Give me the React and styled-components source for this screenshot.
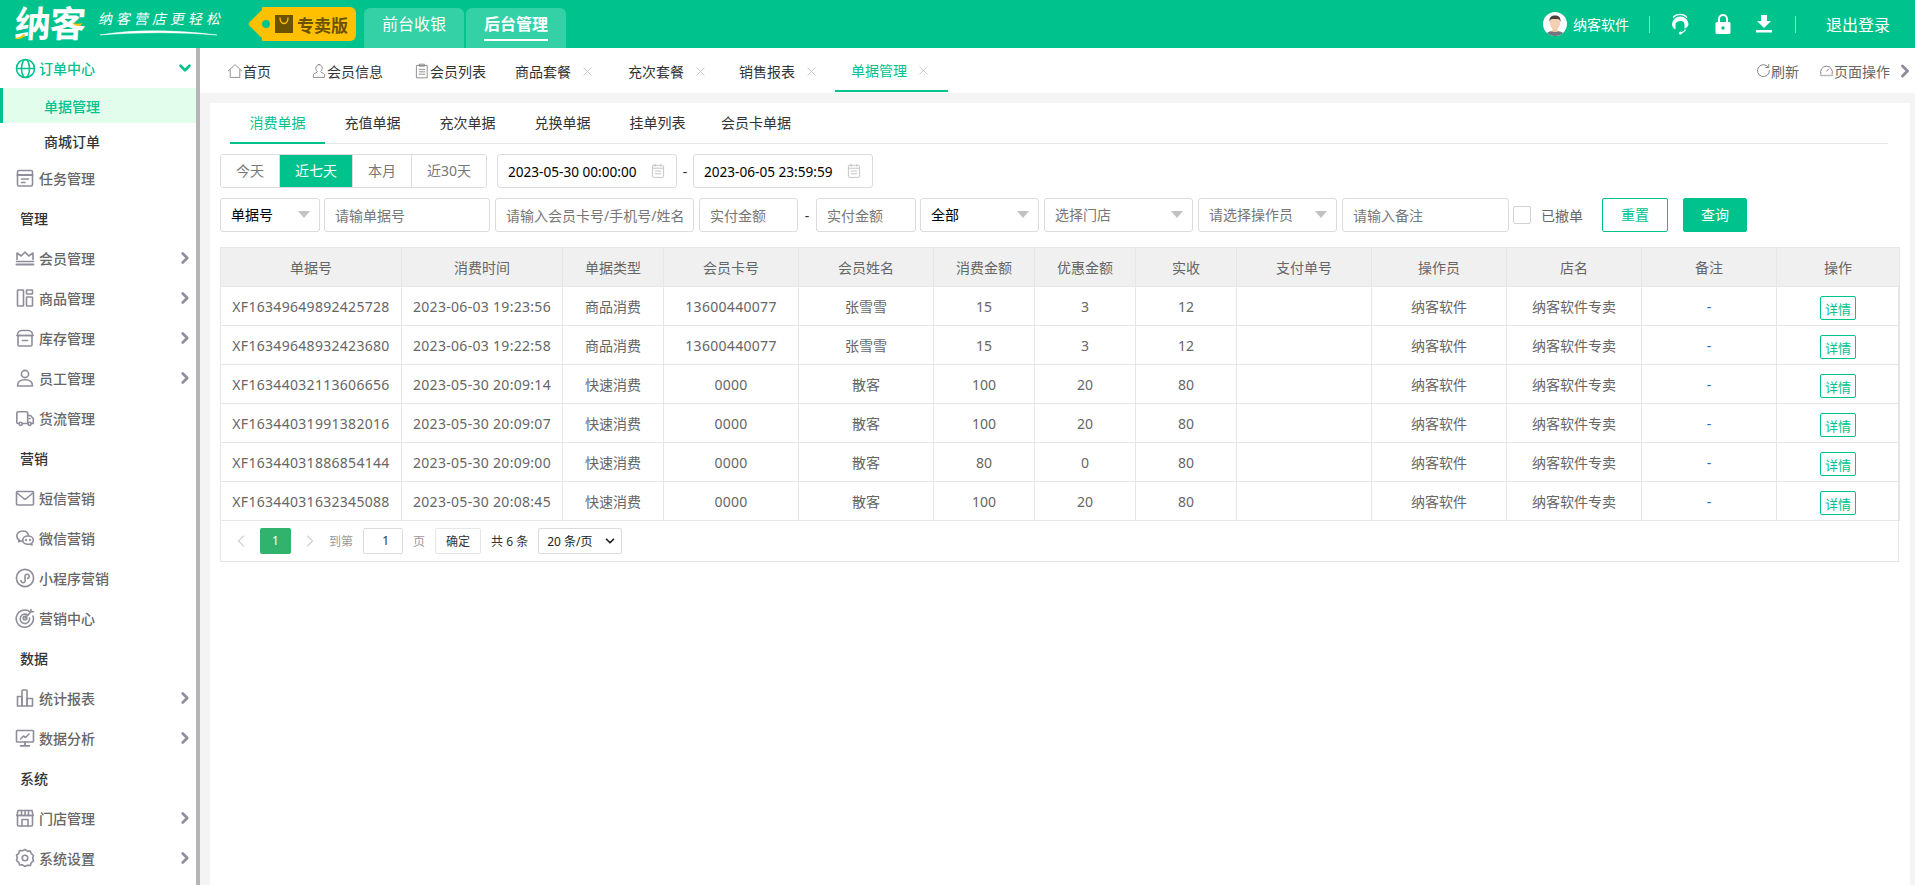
import React from "react";
import styled, { createGlobalStyle } from "styled-components";
import { ChevronDown, ChevronRight, ChevronLeft, X } from "lucide-react";

const COLUMNS = [
  { title: "单据号", width: 181, key: "no", num: true },
  { title: "消费时间", width: 161, key: "time", num: true },
  { title: "单据类型", width: 101, key: "type" },
  { title: "会员卡号", width: 135, key: "card", num: true },
  { title: "会员姓名", width: 135, key: "name" },
  { title: "消费金额", width: 101, key: "amount" },
  { title: "优惠金额", width: 101, key: "discount" },
  { title: "实收", width: 101, key: "paid" },
  { title: "支付单号", width: 135, key: "payNo" },
  { title: "操作员", width: 135, key: "operator" },
  { title: "店名", width: 135, key: "shop" },
  { title: "备注", width: 135, key: "note" },
  { title: "操作", width: 123, key: "action" },
];

const ROWS = [
  ["XF16349649892425728", "2023-06-03 19:23:56", "商品消费", "13600440077", "张雪雪", 15, 3, 12],
  ["XF16349648932423680", "2023-06-03 19:22:58", "商品消费", "13600440077", "张雪雪", 15, 3, 12],
  ["XF16344032113606656", "2023-05-30 20:09:14", "快速消费", "0000", "散客", 100, 20, 80],
  ["XF16344031991382016", "2023-05-30 20:09:07", "快速消费", "0000", "散客", 100, 20, 80],
  ["XF16344031886854144", "2023-05-30 20:09:00", "快速消费", "0000", "散客", 80, 0, 80],
  ["XF16344031632345088", "2023-05-30 20:08:45", "快速消费", "0000", "散客", 100, 20, 80],
].map(([no, time, type, card, name, amount, discount, paid]) => ({
  no, time, type, card, name, amount, discount, paid,
  payNo: "", operator: "纳客软件", shop: "纳客软件专卖", note: "-",
}));

function Ico({ children, size = 20, color = "#8e8e9a", sw = 1.6 }) {
  return (
    <svg width={size} height={size} viewBox="0 0 20 20" fill="none" stroke={color} strokeWidth={sw} strokeLinecap="round" strokeLinejoin="round">
      {children}
    </svg>
  );
}

const SIDE_ICONS = {
  globe: (
    <Ico color="#00c28d" size={21} sw={1.5}>
      <circle cx="10" cy="10" r="8.6" />
      <ellipse cx="10" cy="10" rx="3.8" ry="8.6" />
      <path d="M1.6 10h16.8" />
    </Ico>
  ),
  task: (
    <Ico>
      <rect x="2.5" y="2.5" width="15" height="15.5" rx="1.5" />
      <path d="M2.5 7h15" strokeWidth="2" />
      <path d="M6.5 11h7M6.5 14.5h3.5" />
    </Ico>
  ),
  crown: (
    <Ico>
      <path d="M2 11.5V5l4.2 3L10 4l3.8 4L18 5v6.5" />
      <path d="M1.5 13.5h17" />
      <path d="M1.5 16.5h17" strokeWidth="1.8" />
    </Ico>
  ),
  goods: (
    <Ico>
      <rect x="2.5" y="2" width="6" height="16" rx=".6" />
      <rect x="11.5" y="2" width="6" height="4" rx=".6" />
      <rect x="11.5" y="9" width="6" height="9" rx=".6" />
    </Ico>
  ),
  box: (
    <Ico>
      <path d="M2.5 7.5c0-3 1.8-5 4-5h7c2.2 0 4 2 4 5" />
      <path d="M1.8 7.5h16.4" />
      <rect x="3" y="7.5" width="14" height="10.5" rx="1.2" />
      <path d="M7.5 12.5h5" />
    </Ico>
  ),
  user: (
    <Ico>
      <circle cx="10" cy="6" r="3.6" />
      <path d="M2.5 18c0-4 3-6.2 7.5-6.2s7.5 2.2 7.5 6.2z" />
    </Ico>
  ),
  truck: (
    <Ico>
      <path d="M4 15.5H3a1.2 1.2 0 0 1-1.2-1.2V5A1.2 1.2 0 0 1 3 3.8h8.5A1.2 1.2 0 0 1 12.7 5v10.5H7.5" />
      <path d="M12.7 7.5h2.8l2.8 3v5h-2" />
      <circle cx="5.7" cy="15.8" r="1.6" />
      <circle cx="14.6" cy="15.8" r="1.6" />
      <path d="M15 10.5h-1" />
    </Ico>
  ),
  mail: (
    <Ico>
      <rect x="1.5" y="3.5" width="17" height="13.5" rx="1" />
      <path d="M2 5l8 6.5L18 5" />
    </Ico>
  ),
  wechat: (
    <Ico>
      <path d="M13.5 7.2C13 4.8 10.6 3 7.7 3 4.5 3 1.8 5.2 1.8 8c0 1.6.9 3 2.3 4l-.5 1.8 2.2-1c.6.1 1.2.2 1.9.2" />
      <path d="M13 8c3 0 5.3 1.9 5.3 4.2 0 1.2-.6 2.3-1.7 3.1l.4 1.7-2-1c-.6.2-1.3.3-2 .3-3 0-5.3-1.8-5.3-4.1S10 8 13 8z" />
      <circle cx="11" cy="12" r=".4" />
      <circle cx="15" cy="12" r=".4" />
    </Ico>
  ),
  mini: (
    <Ico>
      <circle cx="10" cy="10" r="8.6" />
      <path d="M6 12.6a2.1 2.1 0 1 0 4-.9V8.3a2.1 2.1 0 1 1 2.4 2.1" />
    </Ico>
  ),
  target: (
    <Ico>
      <path d="M15.5 4.2A8.6 8.6 0 1 0 18 8" />
      <path d="M12.8 7.2A4.7 4.7 0 1 0 14.5 10" />
      <circle cx="10" cy="10" r="1.8" />
      <path d="M10 10l6-6.2M16 1.5v2.3h2.5" />
    </Ico>
  ),
  chart: (
    <Ico>
      <rect x="2.5" y="8.5" width="4.5" height="9.5" />
      <rect x="7" y="2" width="5" height="16" rx=".8" />
      <rect x="12" y="10.5" width="5.5" height="7.5" />
    </Ico>
  ),
  monitor: (
    <Ico>
      <rect x="1.5" y="2.5" width="17" height="11.5" rx=".8" />
      <path d="M10 14v3.5M5.5 17.8h9" strokeWidth="1.8" />
      <path d="M5.5 11l3-3 2 1.5 3.5-3.5" />
    </Ico>
  ),
  store: (
    <Ico>
      <path d="M2.5 7.5V17a1 1 0 0 0 1 1h13a1 1 0 0 0 1-1V7.5" />
      <path d="M2 7.5L3 2.5h14l1 5z" />
      <path d="M2 7.5h16M6.5 2.5v5M10 2.5v5M13.5 2.5v5" />
      <path d="M7 18v-6.5h6V18" />
    </Ico>
  ),
  gear: (
    <Ico>
      <path d="M10 1.5l2.4 1.6 2.9-.1 1 2.7 2.2 1.8-.8 2.7.8 2.7-2.2 1.8-1 2.7-2.9-.1L10 18.5l-2.4-1.6-2.9.1-1-2.7-2.2-1.8.8-2.7-.8-2.7 2.2-1.8 1-2.7 2.9.1z" />
      <circle cx="10" cy="10" r="2.8" />
    </Ico>
  ),
};

const MENU = [
  { label: "任务管理", icon: "task" },
  { group: "管理" },
  { label: "会员管理", icon: "crown", more: true },
  { label: "商品管理", icon: "goods", more: true },
  { label: "库存管理", icon: "box", more: true },
  { label: "员工管理", icon: "user", more: true },
  { label: "货流管理", icon: "truck" },
  { group: "营销" },
  { label: "短信营销", icon: "mail" },
  { label: "微信营销", icon: "wechat" },
  { label: "小程序营销", icon: "mini" },
  { label: "营销中心", icon: "target" },
  { group: "数据" },
  { label: "统计报表", icon: "chart", more: true },
  { label: "数据分析", icon: "monitor", more: true },
  { group: "系统" },
  { label: "门店管理", icon: "store", more: true },
  { label: "系统设置", icon: "gear", more: true },
];

const TOP_TABS = [
  { label: "首页", icon: "home", width: 84 },
  { label: "会员信息", icon: "user", width: 103 },
  { label: "会员列表", icon: "clip", width: 101 },
  { label: "商品套餐", closable: true, width: 113 },
  { label: "充次套餐", closable: true, width: 111 },
  { label: "销售报表", closable: true, width: 112 },
  { label: "单据管理", closable: true, width: 113, active: true },
];

const TAB_ICONS = {
  home: (
    <Ico size={16} color="#777" sw={1}>
      <path d="M1.5 10L10 2l8.5 8M4 8.5V18h12V8.5" />
    </Ico>
  ),
  user: (
    <Ico size={16} color="#777" sw={1}>
      <path d="M10 2c2.5 0 4 2 4 4.5 0 2-1 3.5-2 4.3 0 1 3.8 1.7 5 3.7V18H3v-3.5c1.2-2 5-2.7 5-3.7-1-.8-2-2.3-2-4.3C6 4 7.5 2 10 2z" />
    </Ico>
  ),
  clip: (
    <Ico size={16} color="#777" sw={1}>
      <rect x="3.5" y="3" width="13" height="15.5" />
      <path d="M7 1.5h6V4H7zM6.5 8h7M6.5 11h7M6.5 14h7" />
    </Ico>
  ),
};

const SUB_TABS = ["消费单据", "充值单据", "充次单据", "兑换单据", "挂单列表", "会员卡单据"];
const RANGES = [
  { label: "今天", width: 58 },
  { label: "近七天", width: 73, active: true },
  { label: "本月", width: 59 },
  { label: "近30天", width: 75 },
];

function CalendarIcon() {
  return (
    <Ico size={16} color="#c4c4c4" sw={1.2}>
      <rect x="3" y="3" width="14" height="15" rx="1" />
      <path d="M6.5 1.5V4M13.5 1.5V4M3 6.5h14M6.5 10h7M6.5 13.5h7" />
    </Ico>
  );
}

function App() {
  return (
    <>
      <GlobalStyle />
      <Page>
        <Header>
          <Logo>
            <LogoMark>
              纳客
              <LogoAccent width="72" height="30" viewBox="0 0 72 30">
                <path d="M0 28c3 0 7-1 9-4l2 1c-2 4-7 5-11 3z" fill="#ffc000" />
                <path d="M58 13c3 1 6 1 9 0l-1 2c-3 2-6 1-8-2z" fill="#ffc000" />
              </LogoAccent>
            </LogoMark>
            <Slogan>
              <SloganText>纳客营店更轻松</SloganText>
              <svg width="120" height="8" viewBox="0 0 120 8" fill="none">
                <path d="M1 6C30 1 70 0 118 6C80 3 40 3 1 6z" fill="#fff" stroke="#fff" strokeWidth=".5" />
              </svg>
            </Slogan>
          </Logo>
          <PriceTag>
            <svg width="18" height="18" viewBox="0 0 18 18">
              <rect width="18" height="18" fill="#6b5200" />
              <path d="M5 2.5c0 4 1.5 6 4 6s4-2 4-6" fill="none" stroke="#ffc000" strokeWidth="1.3" />
            </svg>
            <span>专卖版</span>
          </PriceTag>
          <NavTab>
            <NavLabel>前台收银</NavLabel>
          </NavTab>
          <NavTab>
            <NavLabel $active>后台管理</NavLabel>
          </NavTab>
          <HeaderRight>
            <svg width="24" height="24" viewBox="0 0 24 24">
              <defs>
                <clipPath id="avatar-clip"><circle cx="12" cy="12" r="12" /></clipPath>
              </defs>
              <g clipPath="url(#avatar-clip)">
                <rect width="24" height="24" fill="#fff" />
                <path d="M2 24c1-4 5-5 10-5s9 1 10 5z" fill="#74747e" />
                <rect x="9.5" y="14" width="5" height="6" fill="#eec4a4" />
                <ellipse cx="12" cy="11" rx="5.2" ry="6.5" fill="#f4cfb2" />
                <path d="M6.5 10c-.5-5 2-6.5 5.5-6.5s6 1.5 5.5 6.5c-.5-2-1.5-3-2.5-3H9c-1 0-2 1-2.5 3z" fill="#4a3f3a" />
              </g>
            </svg>
            <UserName>纳客软件</UserName>
            <Divider />
            <HeaderIcons>
              <svg width="20" height="22" viewBox="0 0 20 22" fill="none">
                <path d="M3 4.5a9.5 9.5 0 0 1 14 0" stroke="#fff" strokeWidth="1.2" />
                <path d="M10 3.5a8 8 0 0 0-8 7.5c0 2.5 1.2 4.5 3.5 5.5V11c0-1.5 1.5-2.5 4.5-3 2.5-.4 4 .5 4.5 3v4.5c2-.5 4-2 4-4.500a8 8 0 0 0-8.500-7.500z" fill="#fff" />
                <path d="M15.5 16.500c-1 2-2.500 3.200-4.500 3.500" stroke="#fff" strokeWidth="1.2" />
                <circle cx="10.5" cy="20" r="1.6" fill="#fff" />
              </svg>
              <svg width="16" height="20" viewBox="0 0 16 20">
                <path d="M4 9V5a4 4 0 0 1 8 0v4" fill="none" stroke="#fff" strokeWidth="2" />
                <rect x=".5" y="8" width="15" height="12" rx="1.5" fill="#fff" />
                <circle cx="8" cy="14" r="1.7" fill="#00c28d" />
              </svg>
              <svg width="16" height="18" viewBox="0 0 16 18" fill="#fff">
                <path d="M5 0h6v6h4l-7 7-7-7h4z" />
                <rect y="15" width="16" height="2.5" />
              </svg>
            </HeaderIcons>
            <Divider />
            <Logout>退出登录</Logout>
          </HeaderRight>
        </Header>

        <Body>
          <Sidebar>
            <MenuRow>
              <MenuIcon>{SIDE_ICONS.globe}</MenuIcon>
              <MenuLabel $open>订单中心</MenuLabel>
              <ChevronDown size={18} strokeWidth={3.5} color="#00c28d" />
            </MenuRow>
            <SubItem $active>单据管理</SubItem>
            <SubItem>商城订单</SubItem>
            {MENU.map((item) =>
              item.group ? (
                <MenuGroup key={item.group}>{item.group}</MenuGroup>
              ) : (
                <MenuRow key={item.label}>
                  <MenuIcon>{SIDE_ICONS[item.icon]}</MenuIcon>
                  <MenuLabel>{item.label}</MenuLabel>
                  {item.more && <ChevronRight size={18} strokeWidth={3.5} color="#8e8e9a" />}
                </MenuRow>
              )
            )}
          </Sidebar>

          <Main>
            <TopBar>
              {TOP_TABS.map((tab) => (
                <TopTab key={tab.label} $active={tab.active} $width={tab.width}>
                  {tab.icon && TAB_ICONS[tab.icon]}
                  {tab.label}
                  {tab.closable && (
                    <CloseIcon>
                      <X size={15} strokeWidth={1} color="#b4b4b4" />
                    </CloseIcon>
                  )}
                </TopTab>
              ))}
              <TopActions>
                <TopAction>
                  <Ico size={15} color="#777" sw={1.2}>
                    <path d="M16.5 5.5A8 8 0 1 0 18 10" />
                    <path d="M17 2v4h-4" />
                  </Ico>
                  刷新
                </TopAction>
                <TopAction>
                  <Ico size={15} color="#777" sw={1.2}>
                    <path d="M2.5 15a8 8 0 1 1 15 0" />
                    <path d="M10 11l3-3" />
                    <path d="M2 16.5h16" stroke="#bbb" strokeWidth="2" />
                  </Ico>
                  页面操作
                </TopAction>
                <TopChevron>
                  <ChevronRight size={20} strokeWidth={3.5} color="#8e8e9a" />
                </TopChevron>
              </TopActions>
            </TopBar>

            <Card>
              <SubTabs>
                {SUB_TABS.map((label, i) => (
                  <SubTab key={label} $active={i === 0}>{label}</SubTab>
                ))}
              </SubTabs>

              <FilterRow>
                <RangeGroup>
                  {RANGES.map((range) => (
                    <RangeButton key={range.label} $active={range.active} $width={range.width}>{range.label}</RangeButton>
                  ))}
                </RangeGroup>
                <DateBox $ml={10}>
                  2023-05-30 00:00:00
                  <CalendarIcon />
                </DateBox>
                <Dash $width={16}>-</Dash>
                <DateBox>
                  2023-06-05 23:59:59
                  <CalendarIcon />
                </DateBox>
              </FilterRow>

              <FilterRow>
                <SelectBox $width={100} $filled>单据号</SelectBox>
                <TextInput $width={166} $ml={4} placeholder="请输单据号" />
                <TextInput $width={199} $ml={5} placeholder="请输入会员卡号/手机号/姓名" />
                <TextInput $width={99} $ml={5} placeholder="实付金额" />
                <Dash $width={18}>-</Dash>
                <TextInput $width={100} placeholder="实付金额" />
                <SelectBox $width={119} $ml={4} $filled>全部</SelectBox>
                <SelectBox $width={149} $ml={5}>选择门店</SelectBox>
                <SelectBox $width={139} $ml={5}>请选择操作员</SelectBox>
                <TextInput $width={167} $ml={5} placeholder="请输入备注" />
                <CheckBox />
                <CheckLabel>已撤单</CheckLabel>
                <ActionButton $ml={19} $width={66}>重置</ActionButton>
                <ActionButton $ml={15} $width={64} $primary>查询</ActionButton>
              </FilterRow>

              <TableWrap>
                <Table>
                  <colgroup>
                    {COLUMNS.map((col) => (
                      <col key={col.key} style={{ width: col.width }} />
                    ))}
                  </colgroup>
                  <thead>
                    <tr>
                      {COLUMNS.map((col) => (
                        <HeadCell key={col.key}>{col.title}</HeadCell>
                      ))}
                    </tr>
                  </thead>
                  <tbody>
                    {ROWS.map((row) => (
                      <tr key={row.no}>
                        {COLUMNS.map((col) =>
                          col.key === "action" ? (
                            <Cell key={col.key}><DetailButton>详情</DetailButton></Cell>
                          ) : (
                            <Cell key={col.key} $num={col.num} $note={col.key === "note"}>{row[col.key]}</Cell>
                          )
                        )}
                      </tr>
                    ))}
                  </tbody>
                </Table>
                <Pagination>
                  <ChevronLeft size={20} strokeWidth={1.5} color="#d2d2d2" />
                  <PageCurrent>1</PageCurrent>
                  <ChevronRight size={20} strokeWidth={1.5} color="#d2d2d2" />
                  <PageText $ml={9}>到第</PageText>
                  <PageInput>1</PageInput>
                  <PageText>页</PageText>
                  <PageConfirm>确定</PageConfirm>
                  <PageTotal>共 6 条</PageTotal>
                  <PageSize>
                    20 条/页
                    <ChevronDown size={14} strokeWidth={3} color="#222" />
                  </PageSize>
                </Pagination>
              </TableWrap>
            </Card>
          </Main>
        </Body>
      </Page>
    </>
  );
}

export default App;

const GREEN = "#00c28d";

const GlobalStyle = createGlobalStyle`
  html, body {
    margin: 0;
    padding: 0;
    height: 100%;
    overflow: hidden;
  }
  body {
    font-family: "Noto Sans", "Noto Sans CJK SC", sans-serif;
    font-size: 14px;
    color: #333;
  }
  * {
    box-sizing: border-box;
  }
`;

const Page = styled.div`
  width: 1915px;
  height: 885px;
  display: flex;
  flex-direction: column;
`;

const Header = styled.header`
  height: 48px;
  flex: none;
  display: flex;
  align-items: flex-end;
  background: ${GREEN};
  color: #fff;
`;

const Logo = styled.div`
  width: 250px;
  height: 48px;
  padding-left: 15px;
  display: flex;
  align-items: center;
  gap: 14px;
`;

const LogoMark = styled.div`
  position: relative;
  font-size: 36px;
  line-height: 40px;
  font-weight: 700;
  letter-spacing: -1px;
  transform: skewX(-4deg);
`;

const LogoAccent = styled.svg`
  position: absolute;
  left: 0;
  top: 6px;
`;

const Slogan = styled.div`
  display: flex;
  flex-direction: column;
  height: 30px;
`;

const SloganText = styled.div`
  font-size: 14px;
  line-height: 20px;
  letter-spacing: 4px;
  white-space: nowrap;
  transform: skewX(-12deg);
`;

const PriceTag = styled.div`
  position: relative;
  width: 94px;
  height: 34px;
  margin: 0 8px 7px 12px;
  display: flex;
  align-items: center;
  justify-content: flex-end;
  gap: 4px;
  padding-right: 8px;
  background: #ffc000;
  border-radius: 0 6px 6px 0;
  font-size: 17px;
  font-weight: 700;
  color: #6b5200;
  &::before {
    content: "";
    position: absolute;
    left: -11px;
    top: 5px;
    width: 24px;
    height: 24px;
    background: #ffc000;
    border-radius: 3px;
    transform: rotate(45deg) scale(.9);
  }
  &::after {
    content: "";
    position: absolute;
    left: 0;
    top: 13px;
    width: 8px;
    height: 8px;
    border-radius: 50%;
    background: ${GREEN};
  }
  & > * {
    position: relative;
    z-index: 1;
  }
`;

const NavTab = styled.div`
  width: 100px;
  height: 40px;
  margin-right: 2px;
  display: flex;
  justify-content: center;
  background: #33d1a5;
  border-radius: 6px 6px 0 0;
`;

const NavLabel = styled.div`
  height: 33px;
  padding-top: 3px;
  font-size: 16px;
  line-height: 27px;
  font-weight: ${(p) => (p.$active ? 700 : 400)};
  border-bottom: ${(p) => (p.$active ? "2px solid #fff" : "none")};
`;

const HeaderRight = styled.div`
  margin-left: auto;
  height: 48px;
  padding-right: 25px;
  display: flex;
  align-items: center;
`;

const UserName = styled.span`
  margin-left: 6px;
  font-size: 14px;
`;

const Divider = styled.div`
  width: 1px;
  height: 17px;
  margin: 0 20px;
  background: rgba(255, 255, 255, 0.55);
`;

const HeaderIcons = styled.div`
  margin-right: 3px;
  display: flex;
  align-items: center;
  gap: 25px;
`;

const Logout = styled.span`
  margin-left: 10px;
  font-size: 16px;
`;

const Body = styled.div`
  flex: 1;
  min-height: 0;
  display: flex;
`;

const Sidebar = styled.aside`
  width: 200px;
  flex: none;
  background: #fff;
  border-right: 4px solid #b5b5b5;
  overflow: hidden;
`;

const MenuRow = styled.div`
  height: 40px;
  padding: 0 2px 0 15px;
  display: flex;
  align-items: center;
`;

const MenuIcon = styled.span`
  width: 24px;
  flex: none;
  display: flex;
  align-items: center;
`;

const MenuLabel = styled.span`
  flex: 1;
  font-size: 14px;
  font-weight: 500;
  color: ${(p) => (p.$open ? GREEN : "#666")};
`;

const SubItem = styled.div`
  height: 35px;
  padding-left: ${(p) => (p.$active ? "41px" : "44px")};
  display: flex;
  align-items: center;
  font-weight: 500;
  color: ${(p) => (p.$active ? GREEN : "#333")};
  background: ${(p) => (p.$active ? "#e3fdec" : "transparent")};
  border-left: ${(p) => (p.$active ? `3px solid ${GREEN}` : "none")};
`;

const MenuGroup = styled.div`
  height: 40px;
  padding-left: 20px;
  display: flex;
  align-items: center;
  font-weight: 500;
  color: #333;
`;

const Main = styled.main`
  flex: 1;
  min-width: 0;
  display: flex;
  flex-direction: column;
  background: #f4f4f4;
`;

const TopBar = styled.div`
  height: 45px;
  flex: none;
  padding-left: 11px;
  display: flex;
  background: #fff;
`;

const TopTab = styled.div`
  position: relative;
  width: ${(p) => p.$width}px;
  height: 44px;
  padding: 2px 0 0 16px;
  display: flex;
  align-items: center;
  flex: none;
  font-size: 14px;
  color: ${(p) => (p.$active ? GREEN : "#333")};
  border-bottom: ${(p) => (p.$active ? `2px solid ${GREEN}` : "none")};
`;

const CloseIcon = styled.span`
  margin-left: 9px;
  display: flex;
`;

const TopActions = styled.div`
  margin-left: auto;
  display: flex;
  align-items: center;
  gap: 20px;
`;

const TopAction = styled.div`
  display: flex;
  align-items: center;
  color: #666;
`;

const TopChevron = styled.span`
  margin-left: -15px;
  display: flex;
`;

const Card = styled.section`
  flex: 1;
  margin: 10px 5px 0 10px;
  padding: 0 11px 0 10px;
  background: #fff;
`;

const SubTabs = styled.div`
  height: 41px;
  margin: 0 11px 0 10px;
  display: flex;
  border-bottom: 1px solid #e6e6e6;
`;

const SubTab = styled.div`
  height: 41px;
  padding: 0 19.5px;
  line-height: 40px;
  color: ${(p) => (p.$active ? GREEN : "#333")};
  border-bottom: ${(p) => (p.$active ? `2px solid ${GREEN}` : "none")};
  &:last-child {
    padding-left: 16px;
  }
`;

const FilterRow = styled.div`
  height: 34px;
  margin-top: 10px;
  display: flex;
  align-items: center;
`;

const RangeGroup = styled.div`
  display: flex;
  height: 34px;
  border: 1px solid #dcdcdc;
  border-radius: 3px;
  overflow: hidden;
`;

const RangeButton = styled.div`
  width: ${(p) => p.$width}px;
  text-align: center;
  line-height: 32px;
  color: ${(p) => (p.$active ? "#fff" : "#777")};
  background: ${(p) => (p.$active ? GREEN : "#fff")};
  & + & {
    border-left: ${(p) => (p.$active ? "none" : "1px solid #dcdcdc")};
  }
`;

const DateBox = styled.div`
  width: 180px;
  height: 34px;
  margin-left: ${(p) => p.$ml || 0}px;
  padding: 0 10px;
  display: flex;
  align-items: center;
  justify-content: space-between;
  border: 1px solid #dcdcdc;
  border-radius: 3px;
  font-size: 13.6px;
  color: #000;
`;

const Dash = styled.span`
  width: ${(p) => p.$width}px;
  flex: none;
  text-align: center;
  color: #333;
`;

const TextInput = styled.input`
  width: ${(p) => p.$width}px;
  height: 34px;
  margin-left: ${(p) => p.$ml || 0}px;
  padding: 0 10px;
  flex: none;
  border: 1px solid #dcdcdc;
  border-radius: 3px;
  outline: none;
  font: inherit;
  &::placeholder {
    color: #777;
  }
`;

const SelectBox = styled.div`
  position: relative;
  width: ${(p) => p.$width}px;
  height: 34px;
  margin-left: ${(p) => p.$ml || 0}px;
  padding-left: 10px;
  flex: none;
  line-height: 32px;
  border: 1px solid #dcdcdc;
  border-radius: 3px;
  color: ${(p) => (p.$filled ? "#000" : "#777")};
  &::after {
    content: "";
    position: absolute;
    right: 9px;
    top: 12px;
    border-style: solid;
    border-width: 7px 6px 0;
    border-color: #c2c2c2 transparent transparent;
  }
`;

const CheckBox = styled.span`
  width: 18px;
  height: 18px;
  margin-left: 4px;
  flex: none;
  border: 1px solid #d2d2d2;
  border-radius: 2px;
`;

const CheckLabel = styled.span`
  margin-left: 10px;
  color: #666;
`;

const ActionButton = styled.div`
  width: ${(p) => p.$width}px;
  height: 34px;
  margin-left: ${(p) => p.$ml}px;
  flex: none;
  text-align: center;
  line-height: 32px;
  border: 1px solid ${GREEN};
  border-radius: 2px;
  color: ${(p) => (p.$primary ? "#fff" : GREEN)};
  background: ${(p) => (p.$primary ? GREEN : "#fff")};
`;

const TableWrap = styled.div`
  margin-top: 15px;
  border: 1px solid #e6e6e6;
`;

const Table = styled.table`
  width: 100%;
  table-layout: fixed;
  border-collapse: collapse;
  margin: -1px 0 0 -1px;
`;

const HeadCell = styled.th`
  height: 39px;
  padding: 0;
  font-weight: 400;
  color: #666;
  background: #f0f0f0;
  border: 1px solid #e6e6e6;
`;

const Cell = styled.td`
  height: 39px;
  padding: 0;
  text-align: center;
  color: ${(p) => (p.$note ? "#1e6fc8" : "#666")};
  letter-spacing: ${(p) => (p.$num ? ".3px" : "0")};
  border: 1px solid #e6e6e6;
`;

const DetailButton = styled.span`
  display: inline-block;
  width: 36px;
  height: 24px;
  margin-top: 3px;
  line-height: 24px;
  vertical-align: middle;
  border: 1px solid ${GREEN};
  border-radius: 2px;
  color: ${GREEN};
  font-size: 13px;
`;

const Pagination = styled.div`
  height: 40px;
  padding-left: 10px;
  display: flex;
  align-items: center;
  font-size: 12px;
`;

const PageCurrent = styled.span`
  width: 31px;
  height: 26px;
  margin: 0 9px;
  text-align: center;
  line-height: 26px;
  color: #fff;
  background: #31b26d;
  border-radius: 2px;
`;

const PageText = styled.span`
  margin-left: ${(p) => p.$ml || 0}px;
  color: #999;
`;

const PageInput = styled.span`
  width: 40px;
  height: 26px;
  margin: 0 10px;
  padding-right: 13px;
  text-align: right;
  line-height: 24px;
  color: #333;
  border: 1px solid #dcdcdc;
  border-radius: 2px;
`;

const PageConfirm = styled.span`
  width: 46px;
  height: 26px;
  margin-left: 10px;
  text-align: center;
  line-height: 26px;
  color: #333;
  border: 1px solid #e6e6e6;
  border-radius: 2px;
`;

const PageTotal = styled.span`
  margin-left: 10px;
  color: #333;
`;

const PageSize = styled.span`
  width: 84px;
  height: 26px;
  margin-left: 10px;
  padding: 0 4px 0 8px;
  display: flex;
  align-items: center;
  justify-content: space-between;
  color: #222;
  border: 1px solid #dcdcdc;
  border-radius: 2px;
`;
